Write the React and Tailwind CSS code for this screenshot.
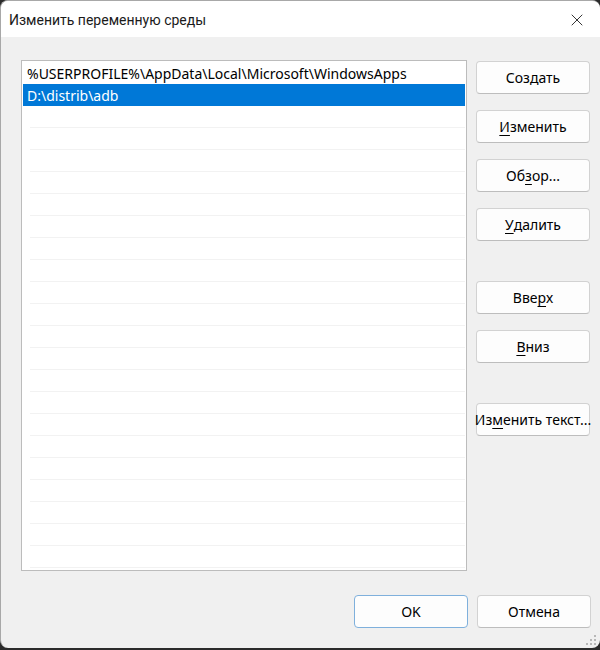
import { X } from "lucide-react";

const font = { fontFamily: '"Noto Sans", "Open Sans", sans-serif' };

function Btn({ children, className = "", primary = false }) {
  return (
    <button
      type="button"
      className={
        "flex h-[33px] w-[114px] items-center justify-center rounded-[4px] border bg-[#fdfdfd] text-[14px] text-black " +
        (primary ? "border-[#7fb0dc] " : "border-[#d2d2d2] border-b-[#bdbdbd] ") +
        className
      }
    >
      {children}
    </button>
  );
}

function U({ children }) {
  return <span className="underline decoration-1 underline-offset-[3px]">{children}</span>;
}

const rows = Array.from({ length: 21 });

export default function App() {
  return (
    <div className="h-[650px] w-[600px] bg-[#2b2b2b]" style={font}>
      <div className="flex h-[648px] w-[600px] flex-col overflow-hidden rounded-[8px] border-t border-l border-[#a8a8a8] bg-[#f0f0f0]">
        <div className="flex h-[36px] shrink-0 items-center justify-between bg-white pl-[8px] pr-[13px] pt-[2px]">
          <span className="font-['Roboto',sans-serif] text-[14px] text-[#1a1a1a]">Изменить переменную среды</span>
          <X size={20} strokeWidth={1.1} className="text-[#222]" />
        </div>
        <div className="flex flex-1 flex-col px-[9px] pt-[23px]">
          <div className="flex gap-[9px] pl-[11px]">
            <div className="h-[511px] w-[446px] border border-[#bcbcbc] bg-white p-[1px] text-[14px]">
              <div className="flex h-[22px] items-center pl-[4px] text-black">
                %USERPROFILE%\AppData\Local\Microsoft\WindowsApps
              </div>
              <div className="flex h-[22px] items-center bg-[#0078d7] pl-[4px] text-white">
                D:\distrib\adb
              </div>
              {rows.map((_, i) => (
                <div key={i} className="ml-[7px] h-[22px] border-b border-[#f2f2f2]" />
              ))}
            </div>
            <div className="flex flex-col pt-[1px]">
              <Btn>Создать</Btn>
              <Btn className="mt-[16px]">
                <U>И</U>зменить
              </Btn>
              <Btn className="mt-[16px]">
                Об<U>з</U>ор...
              </Btn>
              <Btn className="mt-[16px]">
                <U>У</U>далить
              </Btn>
              <Btn className="mt-[40px]">
                Вве<U>р</U>х
              </Btn>
              <Btn className="mt-[16px]">
                <U>В</U>низ
              </Btn>
              <Btn className="mt-[40px] whitespace-nowrap">
                Из<U>м</U>енить текст...
              </Btn>
            </div>
          </div>
          <div className="mt-[24px] flex justify-end gap-[9px]">
            <Btn primary>OK</Btn>
            <Btn>Отмена</Btn>
          </div>
          <div className="relative flex-1">
            <svg className="absolute bottom-[1px] right-[-7px]" width="14" height="14" viewBox="0 0 14 14">
              {[
                [11, 3],
                [11, 7],
                [7, 7],
                [11, 11],
                [7, 11],
                [3, 11],
              ].map(([x, y]) => (
                <rect key={x + "-" + y} x={x - 1} y={y - 1} width="2" height="2" fill="#b8b8b8" />
              ))}
            </svg>
          </div>
        </div>
      </div>
    </div>
  );
}
